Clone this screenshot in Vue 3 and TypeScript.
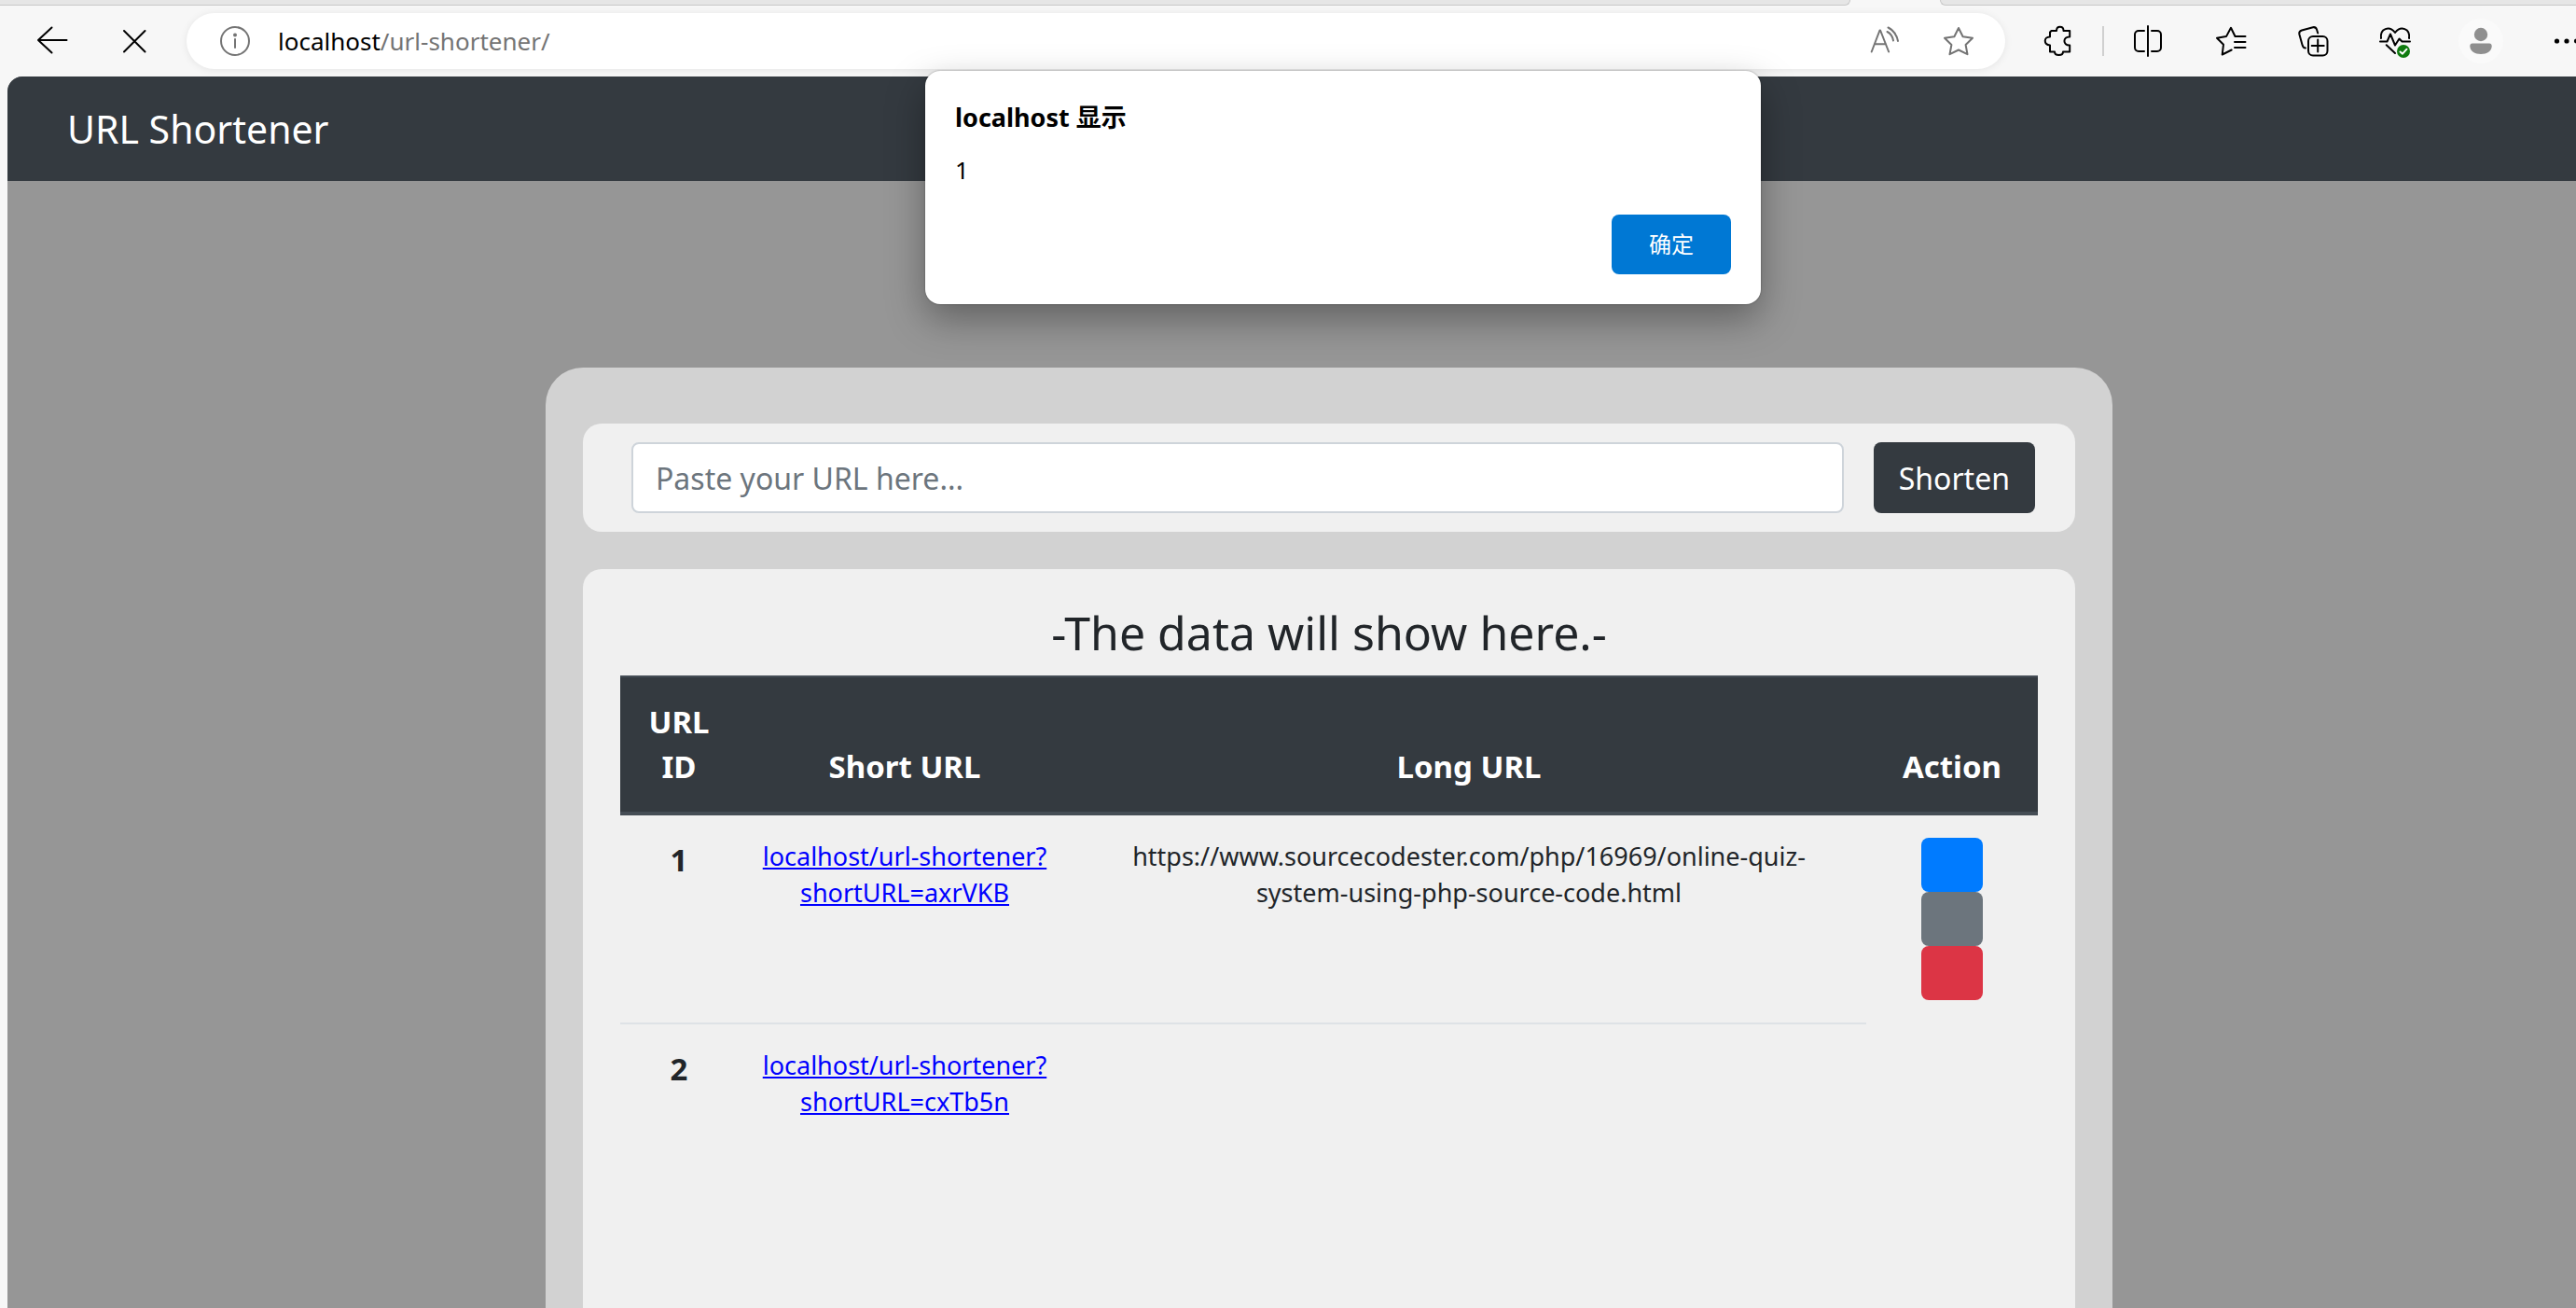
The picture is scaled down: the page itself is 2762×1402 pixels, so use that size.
<script setup lang="ts">
import { ref } from 'vue'

interface ShortLink {
  id: number
  short: string
  long: string
  actions: boolean
}

const columns = ['URL ID', 'Short URL', 'Long URL', 'Action']

const links: ShortLink[] = [
  {
    id: 1,
    short: 'localhost/url-shortener?shortURL=axrVKB',
    long: 'https://www.sourcecodester.com/php/16969/online-quiz-system-using-php-source-code.html',
    actions: true,
  },
  {
    id: 2,
    short: 'localhost/url-shortener?shortURL=cxTb5n',
    long: '',
    actions: false,
  },
]

const longUrl = ref('')
</script>

<template>
  <div class="window">
    <div class="tabs">
      <div class="tabs-left"></div>
      <div class="tabs-right"></div>
    </div>

    <div class="toolbar">
      <button class="tool" type="button" aria-label="Back">
        <svg class="icon" viewBox="0 0 32 32"><path d="M15.5 1.5 1 15l14.500 13.500M1 15h30.500" /></svg>
      </button>
      <button class="tool stop" type="button" aria-label="Stop loading">
        <svg class="icon" viewBox="0 0 32 32"><path d="M5 5l22.500 22.500M27.500 5 5 27.500" /></svg>
      </button>

      <div class="address">
        <button class="tool" type="button" aria-label="Site information">
          <svg class="icon muted" viewBox="0 0 32 32">
            <circle cx="16" cy="16" r="15" />
            <path d="M16 14v9" />
            <circle class="solid" cx="16" cy="9.500" r="1" />
          </svg>
        </button>
        <div class="url"><span class="host">localhost</span>/url-shortener/</div>
        <button class="tool" type="button" aria-label="Read aloud">
          <svg class="icon muted" viewBox="0 0 32 32">
            <path d="M2.700 27.500 11.500 4.500h.6l9 23M6 19.300h12M19.500 6q5.500 3 6.500 9.500M20.500 1.500Q29 6 31 16" />
          </svg>
        </button>
        <button class="tool favorite" type="button" aria-label="Add to favorites">
          <svg class="icon muted" viewBox="0 0 32 32">
            <path d="M16 2l4.600 9.300L31 12.700l-7.400 7.300L25.500 30.200 16 25.500 6.500 30.200 8.400 20 1 12.700l10.400-1.400z" />
          </svg>
        </button>
      </div>

      <div class="extras">
        <button class="tool" type="button" aria-label="Extensions">
          <svg class="icon" viewBox="0 0 32 32">
            <path d="M9.500 5H15c0-5.700 7.500-5.700 7.500 0H29.200v6.500c-7.700-.5-7.700 9.500 0 9v7H22c0 4.700-9 4.700-9 0H8v-7c-7-.5-7-9 0-9V6.500z" />
          </svg>
        </button>
        <span class="divider"></span>
        <button class="tool" type="button" aria-label="Split screen">
          <svg class="icon" viewBox="0 0 32 32">
            <path d="M11 5H5a4 4 0 0 0-4 4v14a4 4 0 0 0 4 4h6M15 0v32M19 5h6a4 4 0 0 1 4 4v14a4 4 0 0 1-4 4h-6" />
          </svg>
        </button>
        <button class="tool" type="button" aria-label="Favorites">
          <svg class="icon" viewBox="0 0 32 32">
            <path d="M16.700 25.500 6.700 30.500 8 19.700 1 12.700l10-1.600L16 1.800 20.500 11h11M20 17h11.500M20 23h11.500" />
          </svg>
        </button>
        <button class="tool" type="button" aria-label="Collections">
          <svg class="icon" viewBox="0 0 32 32">
            <rect x="11" y="11" width="20.500" height="20.500" rx="5" />
            <path d="M21.200 14.500v13M14.700 21h13M8 23.500c-2 0-3-1.500-3.500-3.500L1.300 8.500Q.8 5.500 4 4.500l12-3.300q3-.5 4 2.300l1.200 4" />
          </svg>
        </button>
        <button class="tool" type="button" aria-label="Browser essentials">
          <svg class="icon" viewBox="0 0 32 32">
            <path d="M1 13C-.5 2.500 10-1 16 7c6-8 16.500-4.500 15 6M0 16.500h7.500L11 8.500l5 12 4.500-7 3 3H32M6.700 20.200 16 29" />
            <circle class="badge" cx="25" cy="27" r="7" />
            <path class="tick" d="M21.500 27.500 24 29.700l4.500-5" />
          </svg>
        </button>
        <button class="tool profile" type="button" aria-label="Profile">
          <svg class="avatar" viewBox="0 0 48 48">
            <circle cx="24" cy="17" r="7.200" />
            <path d="M15 26.500h18q2.700 0 2.700 3c0 5-5.200 8.500-11.700 8.500s-11.700-3.500-11.700-8.500q0-3 2.700-3z" />
          </svg>
        </button>
        <button class="tool" type="button" aria-label="Settings and more">
          <svg class="icon dots" viewBox="0 0 32 32">
            <circle cx="5.500" cy="16" r="2.600" />
            <circle cx="16" cy="16" r="2.600" />
            <circle cx="26.500" cy="16" r="2.600" />
          </svg>
        </button>
      </div>
    </div>

    <div class="page">
      <nav class="navbar"><a class="brand" href="#">URL Shortener</a></nav>

      <main class="content">
        <div class="card">
          <form class="panel shorten" @submit.prevent>
            <input v-model="longUrl" class="field" type="text" placeholder="Paste your URL here..." aria-label="URL to shorten" />
            <button class="submit" type="submit">Shorten</button>
          </form>

          <section class="panel results">
            <h3 class="heading">-The data will show here.-</h3>
            <table class="table">
              <colgroup>
                <col class="col-id" />
                <col class="col-short" />
                <col />
                <col class="col-action" />
              </colgroup>
              <thead>
                <tr>
                  <th v-for="column in columns" :key="column" scope="col">{{ column }}</th>
                </tr>
              </thead>
              <tbody>
                <tr v-for="link in links" :key="link.id">
                  <th scope="row">{{ link.id }}</th>
                  <td><a class="short-link" href="#">{{ link.short }}</a></td>
                  <td>{{ link.long }}</td>
                  <td class="actions">
                    <template v-if="link.actions">
                      <button class="action open" type="button" aria-label="Open"></button>
                      <button class="action edit" type="button" aria-label="Edit"></button>
                      <button class="action remove" type="button" aria-label="Delete"></button>
                    </template>
                  </td>
                </tr>
              </tbody>
            </table>
          </section>
        </div>
      </main>
    </div>

    <div class="dialog" role="alertdialog" aria-labelledby="dialog-title" aria-describedby="dialog-text">
      <h2 id="dialog-title" class="dialog-title">localhost 显示</h2>
      <p id="dialog-text" class="dialog-text">1</p>
      <button class="confirm" type="button">确定</button>
    </div>
  </div>
</template>

<style>
html,
body {
  margin: 0;
  overflow: hidden;
}
</style>

<style scoped>
.window,
.window * {
  box-sizing: border-box;
}

/* The browser window runs past the right edge of the screen. */
.window {
  position: relative;
  display: flex;
  flex-direction: column;
  width: calc(100% + 118px);
  height: 100vh;
  background: #f7f7f7;
  color: #212529;
  font-family: "Noto Sans", "Noto Sans CJK SC", sans-serif;
  font-size: 26px;
}

button,
input {
  margin: 0;
  font-family: inherit;
}

.tabs {
  display: flex;
  flex: none;
  gap: 96px;
  height: 6px;
}

.tabs-left,
.tabs-right {
  background: #e6e6e6;
  border-bottom: 1px solid #c8c8c8;
}

.tabs-left {
  flex: 1;
  border-right: 1px solid #c8c8c8;
  border-radius: 0 0 6px 0;
}

.tabs-right {
  width: 800px;
  border-left: 1px solid #c8c8c8;
  border-radius: 0 0 0 6px;
}

.toolbar {
  display: flex;
  flex: none;
  align-items: center;
  height: 76px;
  padding: 0 112px 0 40px;
}

.tool {
  display: block;
  flex: none;
  width: 32px;
  height: 32px;
  padding: 0;
  border: 0;
  background: none;
}

.stop {
  margin: 0 40px 0 56px;
}

.icon {
  display: block;
  width: 32px;
  height: 32px;
  overflow: visible;
  fill: none;
  stroke: #000;
  stroke-width: 2;
  stroke-linecap: round;
  stroke-linejoin: round;
}

.muted {
  stroke: #747474;
}

.solid {
  fill: #747474;
}

.dots {
  fill: #000;
  stroke: none;
}

.badge {
  fill: #0f7b0f;
  stroke: none;
}

.tick {
  stroke: #fff;
}

.address {
  display: flex;
  flex: 1;
  align-items: center;
  height: 60px;
  padding: 0 34px 0 36px;
  border-radius: 30px;
  background: #fff;
  box-shadow: 0 1px 8px rgba(0, 0, 0, 0.08);
}

.url {
  flex: 1;
  padding-left: 30px;
  color: #747474;
  line-height: 40px;
}

.host {
  color: #000;
}

.favorite {
  margin-left: 48px;
}

.extras {
  display: flex;
  align-items: center;
  gap: 56px;
  padding-left: 40px;
}

.divider {
  width: 2px;
  height: 32px;
  margin: 0 -24px;
  background: #d0d0d0;
}

.profile {
  width: 48px;
  height: 48px;
  margin: 0 -4px;
  border-radius: 50%;
  background: #fafafa;
}

.avatar {
  display: block;
  fill: #8f8f8f;
}

.page {
  display: flex;
  flex: 1;
  flex-direction: column;
  min-height: 0;
  margin: 0 38px 0 8px;
  overflow: hidden;
  border-radius: 16px 16px 0 0;
  background: #969696;
}

.navbar {
  display: flex;
  flex: none;
  align-items: center;
  height: 112px;
  padding: 0 64px;
  background: #343a40;
}

.brand {
  color: #fff;
  font-size: 41px;
  line-height: 60px;
  text-decoration: none;
}

.content {
  display: flex;
  flex: 1;
  justify-content: center;
  padding-top: 200px;
}

.card {
  display: flex;
  flex-direction: column;
  gap: 40px;
  width: 100%;
  max-width: 1680px;
  padding: 60px 40px 0;
  border-radius: 40px 40px 0 0;
  background: #d2d2d2;
}

.panel {
  border-radius: 20px;
  background: #f0f0f0;
}

.shorten {
  display: flex;
  gap: 32px;
  padding: 20px 43px 20px 52px;
}

.field {
  flex: 1;
  min-width: 0;
  height: 76px;
  padding: 0 24px;
  border: 2px solid #ced4da;
  border-radius: 8px;
  background: #fff;
  color: #495057;
  font-size: 32px;
}

.field::placeholder {
  color: #6c757d;
  opacity: 1;
}

.submit {
  height: 76px;
  padding: 0 27px;
  border: 0;
  border-radius: 8px;
  background: #343a40;
  color: #fff;
  font-size: 32px;
}

.results {
  flex: 1;
  padding: 38px 40px 0;
  border-radius: 20px 20px 0 0;
}

.heading {
  margin: 0 0 16px;
  font-size: 50px;
  font-weight: 400;
  line-height: 60px;
  text-align: center;
}

.table {
  width: 100%;
  border-spacing: 0;
  table-layout: fixed;
  text-align: center;
}

.col-id {
  width: 126px;
}

.col-short {
  width: 358px;
}

.col-action {
  width: 184px;
}

th,
td {
  padding: 24px;
}

th {
  font-size: 33px;
  font-weight: 700;
  line-height: 48px;
}

td {
  font-size: 27px;
  line-height: 39px;
}

thead th {
  padding: 24px 16px;
  border-top: 2px solid #454d55;
  border-bottom: 4px solid #454d55;
  background: #343a40;
  color: #fff;
  vertical-align: bottom;
}

thead th:first-child {
  padding: 24px;
}

tbody th,
tbody td {
  vertical-align: top;
}

tbody tr + tr > :not(.actions) {
  border-top: 2px solid #dee2e6;
}

.short-link {
  color: #00f;
  text-decoration: underline;
}

.action {
  display: block;
  width: 66px;
  height: 58px;
  margin: 0 auto;
  padding: 0;
  border: 0;
  border-radius: 8px;
}

.open {
  background: #007bff;
}

.edit {
  background: #6c757d;
}

.remove {
  background: #dc3545;
}

.dialog {
  position: absolute;
  top: 76px;
  right: 0;
  left: 0;
  display: flex;
  flex-direction: column;
  width: 896px;
  margin: 0 auto;
  padding: 30px 32px 32px;
  border-radius: 16px;
  background: #fff;
  box-shadow: 0 0 2px rgba(0, 0, 0, 0.4), 0 16px 40px rgba(0, 0, 0, 0.35);
  color: #000;
}

.dialog-title {
  margin: 0;
  font-size: 27px;
  font-weight: 700;
  line-height: 40px;
}

.dialog-text {
  margin: 18px 0 30px;
  font-size: 26px;
  line-height: 36px;
}

.confirm {
  align-self: flex-end;
  width: 128px;
  height: 64px;
  padding: 0 0 3px;
  border: 0;
  border-radius: 8px;
  background: #0078d4;
  color: #fff;
  font-size: 24px;
}
</style>
